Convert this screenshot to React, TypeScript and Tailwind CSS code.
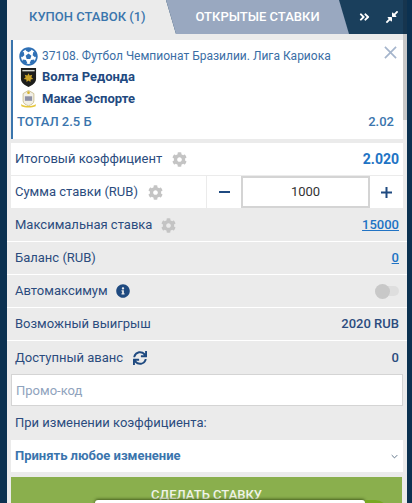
import React from "react";
import { FaAngleDoubleRight, FaCog, FaCompressAlt, FaFutbol, FaInfoCircle, FaSync } from "react-icons/fa";

const font = "font-['Roboto',sans-serif]";

function Gear() {
  return <FaCog className="w-[15px] h-[15px] shrink-0 text-[#c4c4c4]" />;
}

function Row({ children, right, border = true }: { children: React.ReactNode; right: React.ReactNode; border?: boolean }) {
  return (
    <div className={`flex items-center justify-between h-[33px] pl-[8px] pr-[8px] text-[13px] text-[#2b4c7e] ${border ? "border-b border-white" : ""}`}>
      <div className="flex items-center">{children}</div>
      {right}
    </div>
  );
}

function ShieldDark() {
  return (
    <svg viewBox="0 0 18 20" className="w-[17px] h-[19px] shrink-0">
      <path d="M1 0h16v11c0 5-4 7-8 9-4-2-8-4-8-9z" fill="#1d1d1b" />
      <rect x="2.500" y="2" width="13" height="1.500" fill="#d8d8d0" />
      <path d="M9 5.500l1.200 2.500 2.800-.8-1 2.600 2 1.700-2.700.5-.3 2.800L9 13.200 7 14.800l-.3-2.800L4 11.500l2-1.700-1-2.600 2.800.8z" fill="#c9a227" />
    </svg>
  );
}

function ShieldLight() {
  return (
    <svg viewBox="0 0 18 20" className="w-[17px] h-[18px] shrink-0">
      <path d="M9 .5l6 3.500v8c0 3-3 4.500-6 5.500-3-1-6-2.500-6-5.500V4z" fill="#f2efe6" stroke="#c9bd8e" />
      <rect x="5" y="7" width="8" height="5" fill="#8d90a6" />
      <path d="M1 15.500c3 3 13 3 16 0v2.500c-4 2-12 2-16 0z" fill="#e6c63a" />
      <circle cx="9" cy="3" r="1.500" fill="#d6b32c" />
    </svg>
  );
}

export default function App() {
  return (
    <div className={`relative w-[412px] h-[503px] overflow-hidden bg-[#0b3150] px-[7px] ${font}`}>
      <div className="relative w-[400px] h-full bg-[#ebebeb]">
        {/* tabs */}
        <div className="relative flex h-[34px] bg-[#1a3f5c]">
          <div className="w-[170px] bg-[#ebebeb] [clip-path:polygon(0_0,159px_0,169px_100%,0_100%)] flex items-center pl-[22px] text-[13px] font-medium text-[#3a75ad]">
            КУПОН СТАВОК (1)
          </div>
          <div className="w-[183px] -ml-[11px] bg-[#99a8c0] [clip-path:polygon(0_0,173px_0,183px_100%,10px_100%)] flex items-center justify-center text-[13px] font-medium text-white">
            ОТКРЫТЫЕ СТАВКИ
          </div>
          <div className="absolute right-[8px] top-0 h-full flex items-center gap-[15px]">
            <FaAngleDoubleRight className="w-[11px] h-[12px] text-white" />
            <FaCompressAlt className="w-[14px] h-[14px] text-white" />
          </div>
        </div>

        <div className="px-[4px] pt-[6px]">
          {/* bet card */}
          <div className="relative h-[99px] bg-white border-l-2 border-[#3a75ad] pl-[6px] pr-[9px]">
            <div className="flex items-center h-[26px] pt-[6px] text-[12px] text-[#3a6ea5] gap-[4px]">
              <FaFutbol className="w-[19px] h-[19px] shrink-0 text-[#2f70b5]" />
              <span>37108. Футбол Чемпионат Бразилии. Лига Кариока</span>
            </div>
            <div className="flex items-center h-[22px] gap-[5px] pl-[1px] text-[13px] font-bold text-[#1f4a80]">
              <ShieldDark />
              <span>Волта Редонда</span>
            </div>
            <div className="flex items-center h-[22px] gap-[5px] pl-[1px] text-[13px] font-bold text-[#1f4a80]">
              <ShieldLight />
              <span>Макае Эспорте</span>
            </div>
            <div className="flex items-center justify-between -ml-[2px] h-[24px] text-[13px] font-medium text-[#3a75ad]">
              <span>ТОТАЛ 2.5 Б</span>
              <span>2.02</span>
            </div>
            <svg viewBox="0 0 14 14" className="absolute right-[6px] top-[6px] w-[13px] h-[13px]" fill="none" stroke="#a5b5cc" strokeWidth="1.800">
              <path d="M1 1l12 12M13 1L1 13" />
            </svg>
          </div>

          {/* coefficient + stake */}
          <div className="mt-[4px] bg-white text-[13px] text-[#2b4c7e]">
            <div className="flex items-center justify-between h-[33px] pl-[4px] pr-[4px] border-b border-[#ebebeb]">
              <div className="flex items-center gap-[10px]">
                <span>Итоговый коэффициент</span>
                <Gear />
              </div>
              <span className="text-[14px] font-bold text-[#2173c4]">2.020</span>
            </div>
            <div className="flex items-center h-[32px]">
              <div className="flex items-center gap-[10px] w-[196px] h-full pl-[4px] border-r border-[#ebebeb]">
                <span>Сумма ставки (RUB)</span>
                <Gear />
              </div>
              <div className="w-[34px] flex justify-center">
                <div className="w-[11px] h-[2px] bg-[#1f4a80]" />
              </div>
              <div className="w-[129px] h-[32px] border-2 border-[#d4d4d4] flex items-center justify-center text-[#333333]">1000</div>
              <div className="flex-1 flex justify-center">
                <svg viewBox="0 0 11 11" className="w-[11px] h-[11px]" fill="#1f4a80">
                  <path d="M4.500 0h2v4.500H11v2H6.500V11h-2V6.500H0v-2h4.500z" />
                </svg>
              </div>
            </div>
          </div>
        </div>

        {/* summary rows */}
        <div className="pt-[1px]">
          <Row right={<span className="font-medium text-[#2173c4] underline">15000</span>}>
            <span className="mr-[9px]">Максимальная ставка</span>
            <Gear />
          </Row>
          <Row right={<span className="font-medium text-[#2173c4] underline">0</span>}>
            <span>Баланс (RUB)</span>
          </Row>
          <Row
            right={
              <div className="relative w-[24px] h-[10px] rounded-full bg-[#dedede]">
                <div className="absolute left-0 -top-[2px] w-[15px] h-[15px] rounded-full bg-[#c8c8c8]" />
              </div>
            }
          >
            <span className="mr-[8px]">Автомаксимум</span>
            <FaInfoCircle className="w-[14px] h-[14px] text-[#1f4a80]" />
          </Row>
          <Row right={<span className="font-medium">2020 RUB</span>}>
            <span>Возможный выигрыш</span>
          </Row>
          <Row border={false} right={<span className="font-medium">0</span>}>
            <span className="mr-[10px]">Доступный аванс</span>
            <FaSync className="w-[14px] h-[14px] text-[#1f4a80]" />
          </Row>
        </div>

        <div className="px-[4px]">
          <input
            readOnly
            placeholder="Промо-код"
            className="block w-full h-[32px] bg-white border border-[#d4d4d4] px-[4px] text-[13px] text-[#333333] outline-none placeholder:text-[#8fa3bd]"
          />
          <div className="flex items-center h-[34px] pl-[4px] text-[13px] text-[#2b4c7e]">При изменении коэффициента:</div>
          <div className="flex items-center justify-between h-[32px] bg-white pl-[4px] pr-[5px] text-[13px] font-bold text-[#3a75ad]">
            <span>Принять любое изменение</span>
            <svg viewBox="0 0 10 6" className="w-[7px] h-[5px]" fill="none" stroke="#5f7488" strokeWidth="1.400">
              <path d="M1 1l4 4 4-4" />
            </svg>
          </div>
          <div className="mt-[5px] mr-[1px] h-[40px] bg-[#8aaf4d] flex justify-center pt-[8px] text-[13px] font-medium text-[#f0f4e8]">
            СДЕЛАТЬ СТАВКУ
          </div>
        </div>

        {/* scrollbar */}
        <div className="absolute right-0 top-0 w-[4px] h-[120px] bg-black/15" />
      </div>

      {/* notification peeking from below */}
      <div className="absolute left-[95px] top-[500px] w-[270px] h-[40px] bg-white rounded-t-[3px] shadow-[0_-1px_3px_rgba(40,60,10,0.7)]" />
      <div className="absolute left-[365px] top-[500px] w-[24px] h-[40px] bg-[#78a822] rounded-tr-[14px]" />
    </div>
  );
}
